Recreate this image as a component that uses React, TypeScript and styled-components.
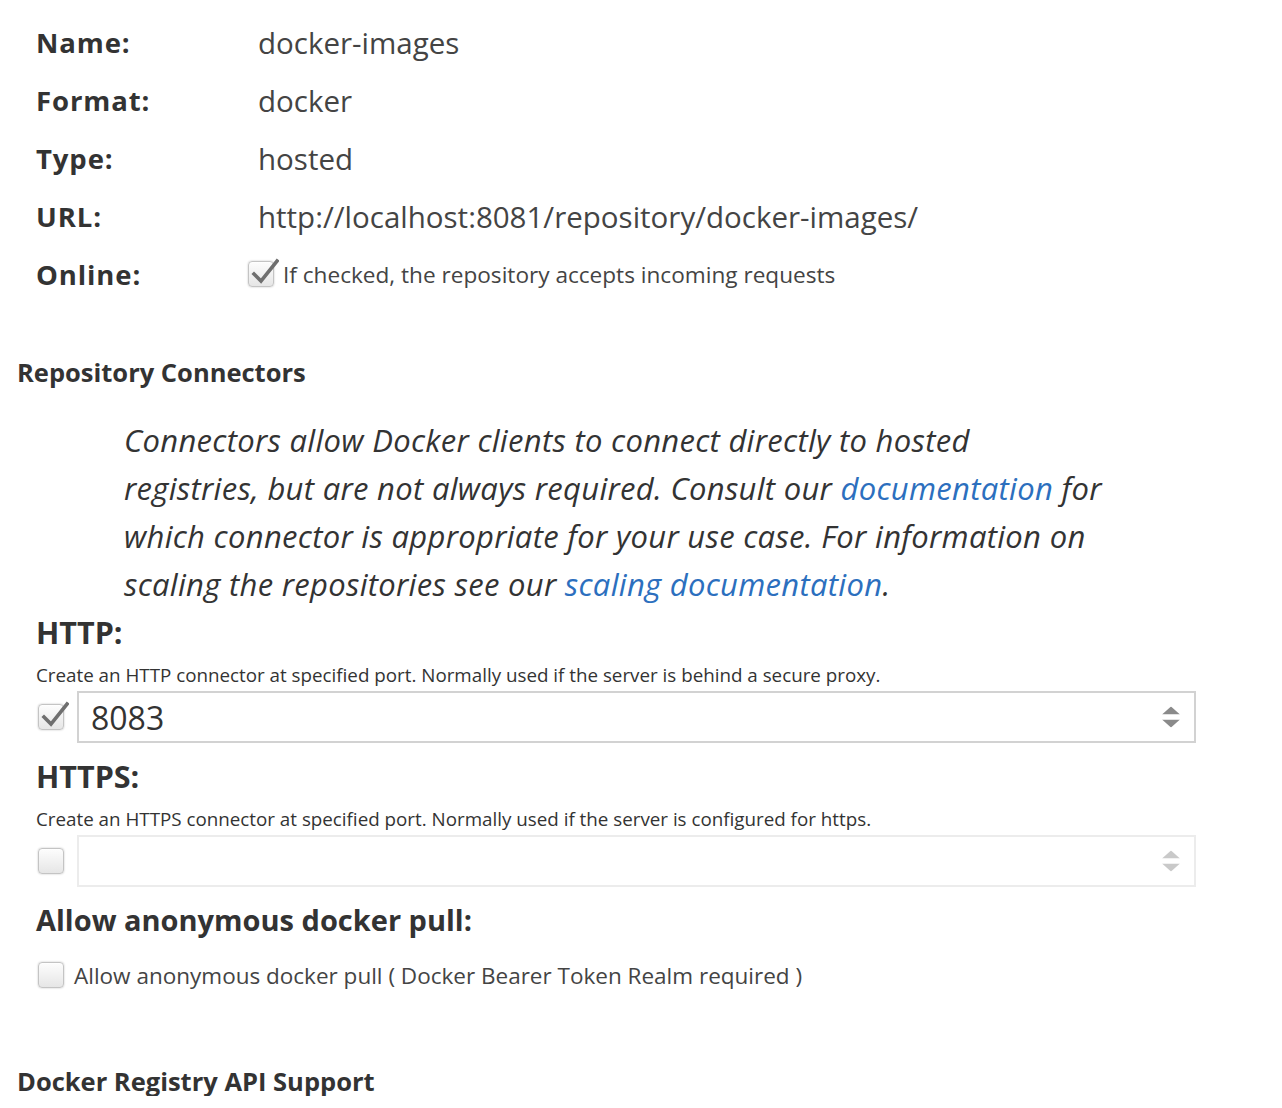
import React from "react";
import styled, { createGlobalStyle } from "styled-components";

const Global = createGlobalStyle`
  html, body { margin: 0; padding: 0; background: #fff; }
  body { font-family: "Open Sans", "Lato", sans-serif; color: #333; }
`;

const Page = styled.div`
  padding-top: 13px;
  width: 1282px;
`;

const InfoRow = styled.div`
  height: 58px;
  display: grid;
  grid-template-columns: 222px 1fr;
  align-items: center;
  padding-left: 36px;
`;

const InfoLabel = styled.div`
  font-weight: 700;
  font-size: 27.5px;
  letter-spacing: 0.9px;
  color: #333;
`;

const InfoValue = styled.div`
  font-size: 29.5px;
  color: #444;
  display: flex;
  align-items: center;
`;

const OnlineValue = styled.div`
  display: flex;
  align-items: center;
  gap: 9px;
  margin-left: -10px;
`;

const SmallText = styled.span<{ $size?: number }>`
  font-size: ${(p) => p.$size ?? 22.6}px;
  color: #444;
`;

const SectionTitle = styled.h2<{ $mt: number }>`
  margin: ${(p) => p.$mt}px 0 0;
  padding-left: 17px;
  font-size: 25.5px;
  line-height: 30px;
  font-weight: 700;
  color: #333;
`;

const Note = styled.p`
  margin: 29px 0 0;
  padding-left: 124px;
  font-style: italic;
  font-size: 31px;
  letter-spacing: 0.3px;
  line-height: 48px;
  color: #333;
`;

const Link = styled.a`
  color: #2c6fbe;
  text-decoration: none;
`;

const FieldHeader = styled.h3<{ $mt: number; $size?: number }>`
  margin: ${(p) => p.$mt}px 0 0;
  padding-left: 36px;
  font-size: ${(p) => p.$size ?? 30.5}px;
  line-height: 36px;
  font-weight: 700;
  color: #333;
`;

const Help = styled.div`
  margin-top: 13px;
  padding-left: 36px;
  font-size: 18.8px;
  line-height: 24px;
  color: #333;
`;

const InputRow = styled.div`
  margin-top: 4px;
  padding-left: 38px;
  display: flex;
  align-items: center;
  gap: 13px;
`;

const NumberBox = styled.div<{ $disabled?: boolean }>`
  position: relative;
  box-sizing: border-box;
  width: 1119px;
  height: 52px;
  border: 2px solid ${(p) => (p.$disabled ? "#ececec" : "#d2d2d2")};
  padding-left: 12px;
  display: flex;
  align-items: center;
  font-size: 32px;
  color: #333;
`;

const Spinner = styled.div<{ $disabled?: boolean }>`
  position: absolute;
  right: 14px;
  top: 50%;
  transform: translateY(-50%);
  display: flex;
  flex-direction: column;
  gap: 5px;
  opacity: ${(p) => (p.$disabled ? 0.45 : 1)};
`;

const CheckRow = styled.div`
  margin-top: 22px;
  padding-left: 38px;
  height: 30px;
  display: flex;
  align-items: center;
  gap: 10px;
`;

const Box = styled.span`
  position: relative;
  flex: none;
  display: inline-block;
  box-sizing: border-box;
  width: 26px;
  height: 26px;
  border-radius: 4px;
  border: 1px solid #c4c4c4;
  background: linear-gradient(#fdfdfd, #e6e6e6);
  box-shadow: 0 0 2px rgba(0, 0, 0, 0.25), inset 0 1px 1px rgba(255, 255, 255, 0.8);
`;

const Tick = styled.svg`
  position: absolute;
  left: 2px;
  top: -4px;
`;

const Checkbox: React.FC<{ checked?: boolean }> = ({ checked }) => (
  <Box>
    {checked && (
      <Tick width="28" height="28" viewBox="0 0 28 28">
        <path d="M3 16 L10 23 L26 3" fill="none" stroke="#6f6f6f" strokeWidth="3.6" strokeLinecap="square" strokeLinejoin="miter" />
      </Tick>
    )}
  </Box>
);

const Arrows: React.FC<{ disabled?: boolean }> = ({ disabled }) => (
  <Spinner $disabled={disabled}>
    <svg width="18" height="8" viewBox="0 0 18 8">
      <path d="M9 0 L18 8 L0 8 Z" fill="#8a8a8a" />
    </svg>
    <svg width="18" height="8" viewBox="0 0 18 8">
      <path d="M0 0 L18 0 L9 8 Z" fill="#8a8a8a" />
    </svg>
  </Spinner>
);

export default function App() {
  return (
    <>
      <Global />
      <Page>
        <InfoRow>
          <InfoLabel>Name:</InfoLabel>
          <InfoValue>docker-images</InfoValue>
        </InfoRow>
        <InfoRow>
          <InfoLabel>Format:</InfoLabel>
          <InfoValue>docker</InfoValue>
        </InfoRow>
        <InfoRow>
          <InfoLabel>Type:</InfoLabel>
          <InfoValue>hosted</InfoValue>
        </InfoRow>
        <InfoRow>
          <InfoLabel>URL:</InfoLabel>
          <InfoValue>http://localhost:8081/repository/docker-images/</InfoValue>
        </InfoRow>
        <InfoRow>
          <InfoLabel>Online:</InfoLabel>
          <OnlineValue>
            <Checkbox checked />
            <SmallText>If checked, the repository accepts incoming requests</SmallText>
          </OnlineValue>
        </InfoRow>

        <SectionTitle $mt={54}>Repository Connectors</SectionTitle>
        <Note>
          Connectors allow Docker clients to connect directly to hosted
          <br />
          registries, but are not always required. Consult our <Link href="#">documentation</Link> for
          <br />
          which connector is appropriate for your use case. For information on
          <br />
          scaling the repositories see our <Link href="#">scaling documentation</Link>.
        </Note>

        <FieldHeader $mt={6}>HTTP:</FieldHeader>
        <Help>Create an HTTP connector at specified port. Normally used if the server is behind a secure proxy.</Help>
        <InputRow>
          <Checkbox checked />
          <NumberBox>
            8083
            <Arrows />
          </NumberBox>
        </InputRow>

        <FieldHeader $mt={15}>HTTPS:</FieldHeader>
        <Help>Create an HTTPS connector at specified port. Normally used if the server is configured for https.</Help>
        <InputRow>
          <Checkbox />
          <NumberBox $disabled>
            <Arrows disabled />
          </NumberBox>
        </InputRow>

        <FieldHeader $mt={15} $size={29}>Allow anonymous docker pull:</FieldHeader>
        <CheckRow>
          <Checkbox />
          <SmallText $size={22.5}>Allow anonymous docker pull ( Docker Bearer Token Realm required )</SmallText>
        </CheckRow>

        <SectionTitle $mt={76}>Docker Registry API Support</SectionTitle>
      </Page>
    </>
  );
}
